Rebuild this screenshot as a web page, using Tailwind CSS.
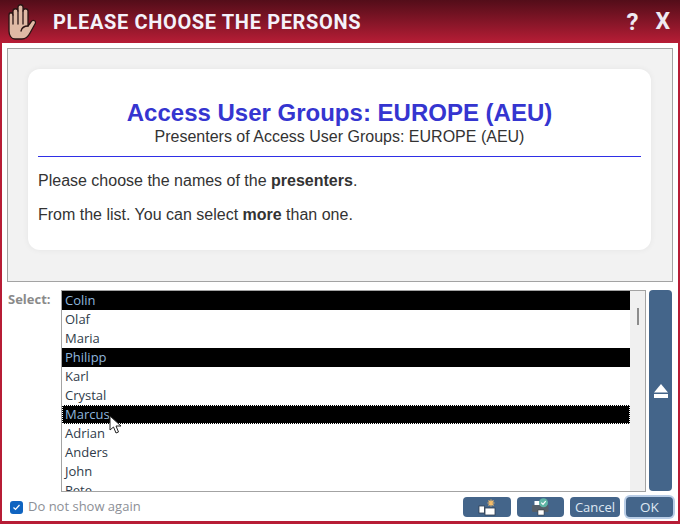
<!DOCTYPE html>
<html lang="en">
<head>
  <meta charset="UTF-8" />
  <title>Please choose the persons</title>
  <script src="https://cdn.jsdelivr.net/npm/@tailwindcss/browser@4"></script>
</head>
<body class="w-[680px] h-[524px] overflow-hidden bg-[#b71c35] font-['Liberation_Sans',sans-serif]">
  <div class="flex flex-col h-full">
    <!-- Title bar -->
    <div class="h-[43px] shrink-0 flex items-center bg-gradient-to-b from-[#530d19] to-[#b81d36] pl-[8px]">
      <svg class="w-[28px] h-[37px] shrink-0 mt-[1px]" viewBox="2 0 28 37" stroke="#2a1414" stroke-width="1.3" stroke-linejoin="round" stroke-linecap="round">
        <path fill="#dfb9a5" d="M3 24V11c0-3 4-3 4 0V7c0-3 5-3 5 0V3c0-3 5-3 5 0v4c0-3 5-3 5 0v15l3-4c2-3 6-1 4 2l-5 9c-2 4-4 6-8 6H9c-4 0-6-4-6-8z"/>
        <path fill="none" d="M7 11v9M12 7v13M17 7v13M22 22c-4 0-6 1-7 5"/>
      </svg>
      <h1 class="ml-[17px] text-[20px] leading-none font-bold tracking-[0.65px] text-[#f4f2fa] font-['Roboto',sans-serif]">PLEASE CHOOSE THE PERSONS</h1>
      <span class="ml-auto text-[24px] leading-none font-bold text-[#efeaf2] font-['Roboto',sans-serif]">?</span>
      <span class="ml-[17px] mr-[10px] text-[23px] leading-none font-bold text-[#efeaf2] font-['Roboto',sans-serif]">X</span>
    </div>

    <!-- Body -->
    <div class="bg-white mx-[2px] h-[478px] px-[5px] pt-[5px] flex flex-col">
      <!-- Info panel -->
      <div class="h-[234px] shrink-0 border border-[#a3a3a3] bg-[#f2f2f2] pl-[20px] pr-[21px] pt-[20px] pb-[30px]">
        <div class="h-[181px] bg-white rounded-[12px] px-[10px] shadow-[0_0_6px_rgba(0,0,0,0.06)]">
          <h2 class="pt-[29px] text-center text-[24px] leading-[30px] font-bold text-[#3535d0]">Access User Groups: EUROPE (AEU)</h2>
          <p class="text-center text-[16px] leading-[18px] text-[#333]">Presenters of Access User Groups: EUROPE (AEU)</p>
          <div class="mt-[10px] h-px bg-[#2f2fe6]"></div>
          <p class="mt-[15px] text-[16px] leading-[18px] text-[#333]">Please choose the names of the <b>presenters</b>.</p>
          <p class="mt-[16px] text-[16px] leading-[18px] text-[#333]">From the list. You can select <b>more</b> than one.</p>
        </div>
      </div>

      <!-- Select row -->
      <div class="relative flex mt-[8px] h-[202px] shrink-0 font-['Open_Sans',sans-serif]">
        <label class="w-[54px] shrink-0 pl-[1px] text-[13px] leading-[19px] font-bold text-[#8a8a8a]">Select:</label>
        <div class="w-[585px] shrink-0 border border-[#a3a3a3] flex overflow-hidden">
          <ul class="flex-1 text-[13px] leading-[19px] text-[#2f3b4a] pl-0 overflow-hidden">
            <li class="h-[19px] px-[3px] bg-black text-[#8fb6dc]">Colin</li>
            <li class="h-[19px] px-[3px]">Olaf</li>
            <li class="h-[19px] px-[3px]">Maria</li>
            <li class="h-[19px] px-[3px] bg-black text-[#8fb6dc]">Philipp</li>
            <li class="h-[19px] px-[3px]">Karl</li>
            <li class="h-[19px] px-[3px]">Crystal</li>
            <li class="h-[19px] px-[3px] bg-black text-[#8fb6dc] outline-1 -outline-offset-1 outline-dotted outline-white">Marcus</li>
            <li class="h-[19px] px-[3px]">Adrian</li>
            <li class="h-[19px] px-[3px]">Anders</li>
            <li class="h-[19px] px-[3px]">John</li>
            <li class="h-[19px] px-[3px]">Pete</li>
          </ul>
          <div class="w-[15px] shrink-0 bg-[#f0f0f0] pt-[17px] pl-[7px]">
            <div class="w-[2px] h-[17px] bg-[#8c8c8c]"></div>
          </div>
        </div>
        <button class="ml-[3px] w-[23px] h-[201px] flex items-end justify-center pb-[93px] bg-[#44658a] rounded-[4px]">
          <svg class="w-[14px] h-[14px]" viewBox="0 0 14 14" fill="#fff"><path d="M7 0l7 8.500H0z"/><rect y="10" width="14" height="4"/></svg>
        </button>
        <!-- Mouse cursor -->
        <svg class="absolute left-[102px] top-[125px] w-[13px] h-[20px]" viewBox="0 0 13 20" fill="#fff" stroke="#222" stroke-width="1"><path d="M1 1v14l3.500-3 2.500 6 2.500-1-2.500-6h5z"/></svg>
      </div>

      <!-- Footer -->
      <div class="flex items-center h-[20px] mt-[5px] font-['Open_Sans',sans-serif]">
        <span class="ml-[3px] w-[13px] h-[13px] rounded-[3px] bg-[#0f64c0] flex items-center justify-center">
          <svg class="w-[9px] h-[9px]" viewBox="0 0 9 9" fill="none" stroke="#fff" stroke-width="1.200"><path d="M1.500 4.500l2 2 4-4.500"/></svg>
        </span>
        <span class="ml-[5px] text-[13px] text-[#8c8f96]">Do not show again</span>
        <button class="ml-auto w-[48px] h-[20px] rounded-[4px] bg-[#44658a] flex items-center justify-center">
          <svg class="w-[26px] h-[18px]" viewBox="0 0 26 18">
            <rect x="5" y="8" width="5.500" height="7" fill="#fff" stroke="#2d3d50" stroke-width=".8"/>
            <rect x="11" y="10" width="10" height="7" fill="#fff" stroke="#2d3d50" stroke-width=".8"/>
            <path d="M17 1.500v7M13.500 5h7M14.500 2.500l5 5M19.500 2.500l-5 5" stroke="#f5bd6a" stroke-width="1.100"/>
          </svg>
        </button>
        <button class="ml-[6px] w-[47px] h-[20px] rounded-[4px] bg-[#44658a] flex items-center justify-center">
          <svg class="w-[28px] h-[18px]" viewBox="0 0 28 18">
            <rect x="7.500" y="3" width="5" height="5" fill="#fff"/>
            <rect x="5" y="7" width="16.500" height="7" rx="1" fill="#555f6a"/>
            <rect x="11" y="12" width="6" height="5" fill="#fff" stroke="#333" stroke-width=".5"/>
            <circle cx="16.500" cy="4.700" r="4.500" fill="#5fb5a5"/>
            <path d="M14.300 4.700l1.700 1.700 2.700-3.200" fill="none" stroke="#fff" stroke-width="1.200"/>
          </svg>
        </button>
        <button class="ml-[6px] w-[50px] h-[20px] rounded-[4px] bg-[#44658a] text-[#dfe8f2] text-[13px] leading-[20px]">Cancel</button>
        <button class="ml-[6px] w-[47px] h-[20px] rounded-[4px] bg-[#44658a] text-[#dfe8f2] text-[13.500px] leading-[20px] shadow-[0_0_0_2px_#b9cde6]">OK</button>
      </div>
    </div>
  </div>
</body>
</html>
